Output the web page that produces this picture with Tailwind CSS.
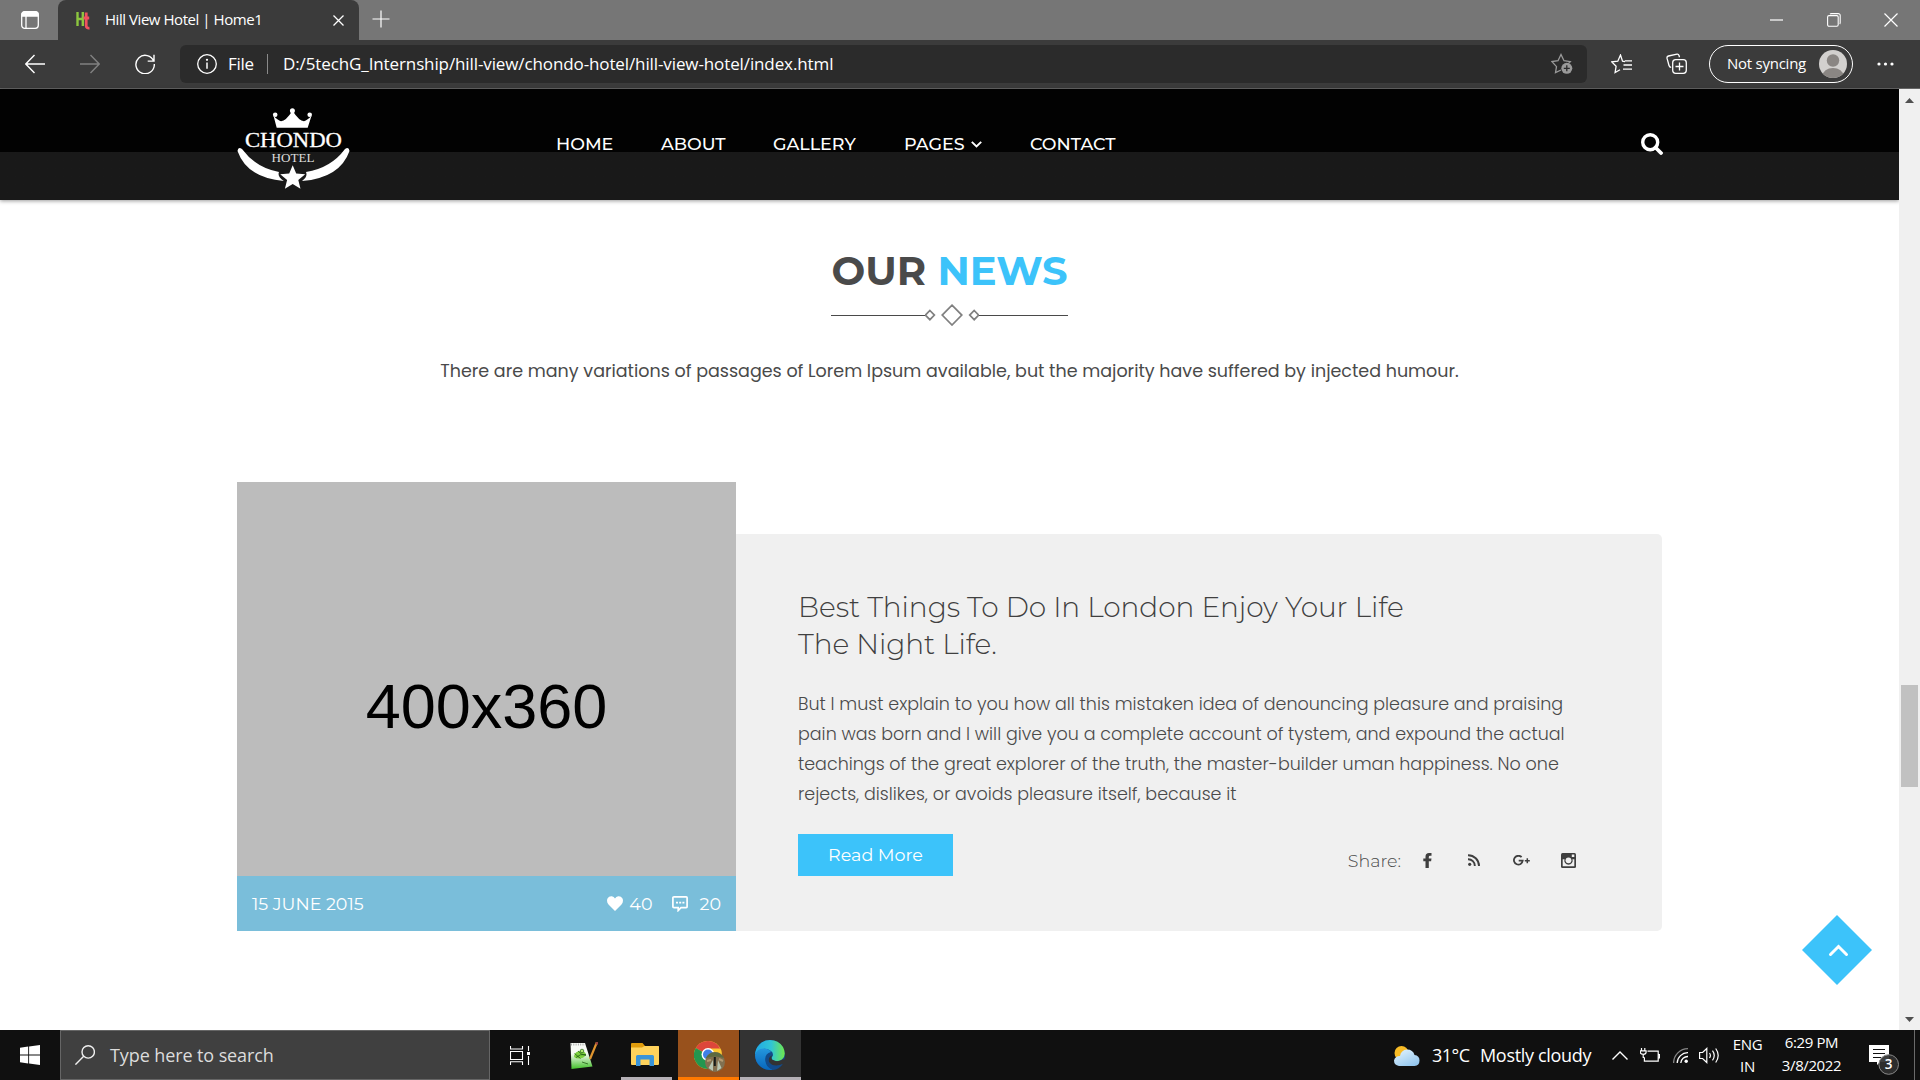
<!DOCTYPE html>
<html lang="en">
<head>
<meta charset="utf-8">
<title>Hill View Hotel | Home1</title>
<script src="https://cdn.jsdelivr.net/npm/@tailwindcss/browser@4"></script>
</head>
<body class="flex h-[1080px] w-[1920px] flex-col overflow-hidden bg-white font-['Open_Sans','Noto_Sans',sans-serif]">

<!-- Tab strip -->
<div class="flex h-10 shrink-0 items-end bg-[#767676] text-white">
  <div class="flex h-10 w-[58px] items-center justify-center rounded-br-lg pl-0.5">
    <svg class="size-[18px]" viewBox="0 0 18 18" fill="none" stroke="#fff" stroke-width="1.3"><rect x=".7" y=".7" width="16.6" height="16.6" rx="3"/><path d="M1 3.5a2.5 2.5 0 0 1 2.5-2.5h11A2.5 2.5 0 0 1 17 3.5V5H1z" fill="#fff"/><path d="M5 5v12"/></svg>
  </div>
  <div class="flex h-10 w-[301px] items-center rounded-t-lg bg-[#3b3b3b] pl-[18px] pr-3.5">
    <svg class="h-[19px] w-[14px] shrink-0" viewBox="0 0 14 19" fill="none" stroke-width="2.400"><path d="M1.500 1v14M2 8h5.500M6.800 1v14" stroke="#8cc63f"/><path d="M10.200 1.500v13.200q0 2.800 3.300 2.400M7.500 7h5.700" stroke="#f0525f" stroke-width="2.800"/></svg>
    <span class="mb-px ml-[15px] grow whitespace-nowrap text-[15px] leading-[39px] tracking-[-0.45px]">Hill View Hotel | Home1</span>
    <svg class="mr-px size-[11px] shrink-0" viewBox="0 0 11 11" stroke="#fff" stroke-width="1.3"><path d="M.5.5l10 10M10.500.5l-10 10"/></svg>
  </div>
  <svg class="mb-3 ml-[13px] size-[18px]" viewBox="0 0 18 18" stroke="#fff" stroke-width="1.2"><path d="M9 .5v17M.5 9h17"/></svg>
  <div class="ml-auto flex h-10 items-center gap-[43px] pr-[22px]">
    <svg class="-mr-px mr-px h-3.5 w-[13px]" viewBox="0 0 13 14" stroke="#fff" stroke-width="1.2"><path d="M0 7h13"/></svg>
    <svg class="size-3.5" viewBox="0 0 14 14" fill="none" stroke="#fff" stroke-width="1.1"><rect x=".6" y="2.6" width="10.6" height="10.6" rx="1.4"/><path d="M3 1Q3.400.6 4.500.6h6.700a2 2 0 0 1 2 2v6.900q0 1-.5 1.500"/></svg>
    <svg class="size-3.5" viewBox="0 0 14 14" stroke="#fff" stroke-width="1.2"><path d="M.5.5l13 13M13.500.5l-13 13"/></svg>
  </div>
</div>

<!-- Toolbar -->
<div class="flex h-[49px] shrink-0 items-center border-b border-[#666] bg-[#3b3b3b] pb-px text-white">
  <svg class="ml-[25px] h-5 w-5" viewBox="0 0 20 20" fill="none" stroke="#fff" stroke-width="1.4"><path d="M20 10H1M9.5 1L.8 10l8.7 9"/></svg>
  <svg class="ml-[35px] h-5 w-5" viewBox="0 0 20 20" fill="none" stroke="#818181" stroke-width="1.4"><path d="M0 10h19M10.500 1l8.700 9-8.700 9"/></svg>
  <svg class="ml-[35px] h-5 w-5" viewBox="0 0 20 20" fill="none" stroke="#fff" stroke-width="1.4"><path d="M18.800 7.500A9.200 9.200 0 1 0 19.300 10M19 .8v6.300h-6.300"/></svg>
  <div class="ml-[25px] flex h-[38px] w-[1407px] items-center rounded-md bg-[#2b2b2b] pl-[17px] pr-3.5">
    <svg class="size-5 shrink-0" viewBox="0 0 20 20" fill="none" stroke="#fff" stroke-width="1.3"><circle cx="10" cy="10" r="9.300"/><path d="M10 8.500v6.200" stroke-width="1.500"/><circle cx="10" cy="5.800" r=".5"/></svg>
    <span class="ml-[11px] w-[39px] whitespace-nowrap text-[17px] leading-9 tracking-[-0.3px]">File</span>
    <span class="h-5 w-px bg-[#8a8a8a]"></span>
    <span class="ml-[15px] grow whitespace-nowrap text-[17px] leading-9 tracking-[-0.11px]">D:/5techG_Internship/hill-view/chondo-hotel/hill-view-hotel/index.html</span>
    <svg class="h-[21px] w-[22px]" viewBox="0 0 22 21" fill="none" stroke="#9a9a9a" stroke-width="1.300"><path d="M10 17l-5.500 2.600 1-6L1 8.600l6-.9L10 1.500l3 6.200 6.300.9-2 2"/><circle cx="15.800" cy="15.300" r="5.500" fill="#9a9a9a" stroke="none"/><path d="M15.800 12.300v6M12.800 15.300h6" stroke="#2b2b2b"/></svg>
  </div>
  <svg class="ml-[24px] h-5 w-[22px]" viewBox="0 0 22 20" fill="none" stroke="#fff" stroke-width="1.300"><path d="M14 7.500l-2.500-.3L9.500 1 6.800 7.200l-6 .7 4.300 4.400-1 6.300L9 15.800M14 6.800h7M12.500 11h8.500M12 15.200h9"/></svg>
  <svg class="ml-[33px] h-[21px] w-[21px]" viewBox="0 0 21 21" fill="none" stroke="#fff" stroke-width="1.300"><rect x="6.700" y="6.700" width="13.600" height="13.600" rx="3"/><path d="M13.500 9.500v8M9.500 13.500h8M13.500 4.200l-.5-1.700Q12.500.9 11 1.200L2.500 3Q.7 3.500 1 5.200l2 7.300q.5 1.700 2.200 1.800"/></svg>
  <div class="ml-[22px] flex h-[38px] w-[144px] items-center rounded-full border-[1.5px] border-white pl-[17px] pr-[5px]">
    <span class="mb-0.5 grow whitespace-nowrap text-[15px] leading-8 tracking-[-0.25px]">Not syncing</span>
    <svg class="size-7 shrink-0" viewBox="0 0 28 28"><clipPath id="av"><circle cx="14" cy="14" r="14"/></clipPath><g clip-path="url(#av)"><rect width="28" height="28" fill="#d2d0ce"/><circle cx="14" cy="10.500" r="6.200" fill="#8a8683"/><ellipse cx="14" cy="26" rx="10.500" ry="8" fill="#8a8683"/></g></svg>
  </div>
  <svg class="ml-6 h-1 w-[17px]" viewBox="0 0 17 4" fill="#fff"><circle cx="2" cy="2" r="1.600"/><circle cx="8.500" cy="2" r="1.600"/><circle cx="15" cy="2" r="1.600"/></svg>
</div>

<!-- Page viewport -->
<div class="flex h-[941px] shrink-0">
  <main class="w-[1899px] font-['Montserrat','Inter',sans-serif] text-[#4a4a4a]">
    <header class="flex h-[111px] bg-linear-to-b from-[#020202] from-[63px] to-[#191919] to-[63px] pl-[237px] pr-[236px] text-white shadow-[0_1px_4px_rgba(0,0,0,0.4)]">
      <svg class="mt-[18px] h-[82px] w-[113px] shrink-0" viewBox="0 0 113 82" fill="#fff">
        <g transform="translate(.7 .8)">
        <path d="M39 20L35.800 8q4 4.500 7.500 5.400Q48 13.500 54.800 3q6.800 10.500 11.500 10.400 3.500-.9 7.500-5.400L70 20z"/>
        <circle cx="37.500" cy="7" r="2.300"/><circle cx="54.700" cy="3" r="2.500"/><circle cx="72" cy="7" r="2.300"/>
        </g>
        <text x="8" y="39.800" font-family="Liberation Serif, serif" font-size="21.500" textLength="97" lengthAdjust="spacingAndGlyphs" stroke="#fff" stroke-width=".3">CHONDO</text>
        <text x="34.500" y="55" font-family="Liberation Serif, serif" font-size="13.500" textLength="43" lengthAdjust="spacingAndGlyphs" fill="#ddd">HOTEL</text>
        <path d="M.5 44Q1 39.500 5 42q14 19 37 23-2 4.500 4.800 9Q10 71 .5 44zM112.500 44q-.5-4.500-4.500-2-14 19-39 23 2 4.500-4 9 38-3 47.500-30z"/>
        <path d="M55.700 58.300l3.500 8.300 9 .7-6.900 5.800 2.200 8.600-7.800-4.700-7.800 4.700 2.200-8.600-6.900-5.800 9-.7z"/>
      </svg>
      <nav class="ml-[206px] flex h-[109px] items-center text-[17.5px] font-medium leading-6">
        <a class="w-[105px]">HOME</a>
        <a class="w-[112px]">ABOUT</a>
        <a class="w-[131px]">GALLERY</a>
        <a class="flex w-[126px] items-center">PAGES
          <svg class="ml-1.5 mt-0.5 h-[7px] w-[11px]" viewBox="0 0 11 7" fill="none" stroke="#fff" stroke-width="1.900"><path d="M.8.8l4.700 4.700L10.200.8"/></svg></a>
        <a>CONTACT</a>
      </nav>
      <svg class="ml-auto mt-11 size-[22px]" viewBox="0 0 22 22" fill="none" stroke="#fff"><circle cx="9.200" cy="9.200" r="7.500" stroke-width="3.400"/><path d="M14.500 14.500l5.500 5.500" stroke-width="3.800" stroke-linecap="round"/></svg>
    </header>

    <section class="flex flex-col items-center pt-[47px]">
      <h2 class="text-[40px] font-bold leading-[48px]">OUR <span class="text-[#3cc3fa]">NEWS</span></h2>
      <div class="mt-[9px] flex h-[22px] w-[237px] items-center">
        <span class="h-px w-[94px] bg-[#4a4a4a]"></span>
        <svg class="h-[22px] w-[54px]" viewBox="0 0 54 22" fill="none" stroke="#808080" stroke-width="1.700"><path d="M4.900 6.500l4.500 4.600-4.500 4.600L.4 11.100zM27 1.200l9.800 9.900L27 21l-9.800-9.900zM49.200 6.500l4.500 4.600-4.500 4.600-4.500-4.600z"/></svg>
        <span class="h-px grow bg-[#4a4a4a]"></span>
      </div>
      <p class="mt-[30px] font-['Poppins','Inter',sans-serif] text-[17.5px] leading-[30px]">There are many variations of passages of Lorem Ipsum available, but the majority have suffered by injected humour.</p>
    </section>

    <article class="ml-[237px] mt-[96px] flex h-[449px] w-[1425px] items-end">
      <figure class="flex h-[449px] w-[499px] shrink-0 flex-col bg-[#bcbcbc]">
        <div class="flex h-[394px] justify-center pt-[189px] font-['Liberation_Sans',Arial,sans-serif] text-[63px] leading-[70px] text-black"><span>400x360</span></div>
        <figcaption class="flex h-[55px] items-center bg-[#7abeda] px-[15px] text-[17.5px] leading-6 text-white">
          <span class="grow">15 JUNE 2015</span>
          <svg class="h-[15px] w-4" viewBox="0 0 16 15" fill="#fff"><path d="M8 15L1.500 8.500Q-.8 5.500.5 2.500 2 0 4.800.3 7 .5 8 2.500 9 .5 11.200.3q2.800-.3 4.300 2.200 1.300 3-1 6z"/></svg>
          <span class="ml-1.5">40</span>
          <svg class="ml-[19px] h-4 w-4" viewBox="0 0 16 16" fill="none" stroke="#fff" stroke-width="1.700"><path d="M2 .9h12.200q.9 0 .9.900v8.900q0 .9-.9.900H9L6.200 14.500v-2.900H2q-1.100 0-1.100-.9V1.800Q.9.900 2 .9z"/><path d="M4 6.600h8.500" stroke-dasharray="2 1.200"/></svg>
          <span class="ml-[12px]">20</span>
        </figcaption>
      </figure>
      <div class="flex h-[397px] grow flex-col rounded-r-[5px] bg-[#f0f0f0] pl-[62px] pr-[86px] pt-[55px]">
        <h3 class="h-[74px] whitespace-nowrap text-[28px] font-light leading-[37px] tracking-[-0.07px] text-[#404040]">Best Things To Do In London Enjoy Your Life<br>The Night Life.</h3>
        <p class="mt-[26px] whitespace-nowrap font-['Poppins','Inter',sans-serif] text-[17.5px] font-light leading-[30px]">But I must explain to you how all this mistaken idea of denouncing pleasure and praising<br>pain was born and I will give you a complete account of tystem, and expound the actual<br>teachings of the great explorer of the truth, the master-builder uman happiness. No one<br>rejects, dislikes, or avoids pleasure itself, because it</p>
        <div class="mt-[25px] flex items-start">
          <a class="flex h-[42px] w-[155px] items-center justify-center bg-[#3cc3fa] text-[17.5px] leading-6 text-white">Read More</a>
          <div class="ml-auto mt-[15px] flex h-6 items-center text-[17.5px] font-light leading-6">
            <span>Share:</span>
            <svg class="mb-0.5 ml-[22px] h-[15px] w-[9px]" viewBox="0 0 9 15" fill="#3f3f3f"><path d="M2.500 15V8.300H.3V5.500h2.200V3.700Q2.500 0 6 0h2.500v2.700H7q-1.200 0-1.200 1.200v1.600h2.700L8.100 8.300H5.800V15z"/></svg>
            <svg class="mb-0.5 ml-[36px] h-3 w-3" viewBox="0 0 12 12" fill="none" stroke="#3f3f3f" stroke-width="1.900"><circle cx="1.700" cy="10.300" r="1.600" fill="#3f3f3f" stroke="none"/><path d="M0 5.200A6.600 6.600 0 0 1 6.800 12M0 1.200A10.800 10.800 0 0 1 11 12"/></svg>
            <svg class="mb-0.5 ml-[33px] h-[11px] w-[17px]" viewBox="0 0 17 11" fill="none" stroke="#3f3f3f"><path d="M8.600 2.200A4.400 4.400 0 1 0 9.700 5.700H5.700" stroke-width="1.800"/><path d="M14.300 3.200v5M11.800 5.700h5" stroke-width="1.500"/></svg>
            <svg class="mb-0.5 ml-[31px] size-[15px]" viewBox="0 0 15 15"><rect width="15" height="15" rx="1.500" fill="#3f3f3f"/><path d="M1.700 6.200h1.800a4.200 4.200 0 1 0 8 0h1.800v7.100H1.700zM10.800 1.500h2.500v2.500h-2.500z" fill="#f0f0f0"/><circle cx="7.500" cy="7.300" r="2.900" fill="#f0f0f0"/></svg>
          </div>
        </div>
      </div>
    </article>
    <a class="absolute left-[1802px] top-[915px]"><svg class="size-[70px]" viewBox="0 0 70 70"><path d="M35 0l35 35-35 35L0 35z" fill="#3cc3fa"/><path d="M28.500 39.500l8-8 8 8" fill="none" stroke="#fff" stroke-width="3" stroke-linecap="round"/></svg></a>
  </main>
  <!-- Scrollbar -->
  <div class="flex w-[21px] flex-col items-center bg-[#f0f0f0] pt-[9px] pb-2">
    <svg class="h-[5px] w-[9px]" viewBox="0 0 9 5" fill="#505050"><path d="M0 5l4.500-5L9 5z"/></svg>
    <span class="mt-[582px] h-[102px] w-[17px] bg-[#c1c1c1]"></span>
    <svg class="mt-auto h-[5px] w-[9px]" viewBox="0 0 9 5" fill="#505050"><path d="M0 0h9L4.500 5z"/></svg>
  </div>
</div>

<!-- Taskbar -->
<div class="flex h-[50px] shrink-0 items-center bg-[#101010] text-white">
  <svg class="ml-5 size-5" viewBox="0 0 20 20" fill="#fff"><path d="M0 2.800l8.200-1.200v7.900H0zM9.100 1.500L20 0v9.500H9.100zM0 10.400h8.200v8L0 17.200zM9.100 10.400H20V20L9.100 18.500z"/></svg>
  <div class="ml-5 flex h-[50px] w-[430px] items-center border border-[#666] bg-[#404040] pl-3.5">
    <svg class="size-5" viewBox="0 0 20 20" fill="none" stroke="#f0f0f0" stroke-width="1.400"><circle cx="13.200" cy="6.900" r="6.200"/><path d="M8.700 11.300L.4 19.600"/></svg>
    <span class="ml-[15px] text-[18px] leading-8 tracking-[-0.1px] text-[#dcdcdc]">Type here to search</span>
  </div>
  <svg class="ml-5 h-[19px] w-5" viewBox="0 0 20 19" fill="none" stroke="#fff" stroke-width="1.100"><path d="M.5 0v3h12V0M.5 19v-3.200h12V19M.5 5.500h12v8H.5zM18.500 0v5M18.500 10v9"/><path d="M17 6h3v3h-3z" fill="#fff" stroke="none"/></svg>
  <svg class="ml-10 h-[27px] w-7" viewBox="0 0 28 27"><defs><linearGradient id="np" x2="0" y2="1"><stop offset=".4" stop-color="#f7faf5"/><stop offset="1" stop-color="#43c02a"/></linearGradient></defs><path d="M.5 1h14.500l7.500 23.500L1.500 27z" fill="url(#np)"/><path d="M1 2.500h14" stroke="#aaa" stroke-width="2" stroke-dasharray="1 1.300"/><path d="M4 14q1-5 7-5 5 .5 5 4-3 4-8 3.500-4-.5-4-2.500z" fill="#7ed13f"/><path d="M4.500 11.500l6 5M8 9q3 4 8 4.500M6 15.500q4-4 10-3M12 20l6 2" stroke="#235e17" stroke-width=".8" fill="none"/><circle cx="12" cy="9" r="1.800" fill="#b4ec72" stroke="#235e17" stroke-width=".7"/><path d="M27 0l-7 17" stroke="#e0952f" stroke-width="2.200"/><path d="M27.500 0l-1.200 2.600" stroke="#9b4242" stroke-width="2.400"/></svg>
  <div class="ml-[23px] flex h-[50px] w-[51px] flex-col items-center">
    <svg class="mr-[3px] mt-[13px] h-[24px] w-7" viewBox="0 0 28 24"><path d="M0 1q0-1 1-1h10.500L14 3h13q1 0 1 1v17H0z" fill="#e09c0c"/><path d="M0 4.500h11L13.500 3H27q1 0 1 1v17q0 1-1 1H1q-1 0-1-1z" fill="#ffd35c"/><path d="M5 13.500q0-1.500 1.500-1.500h15q1.500 0 1.500 1.500V23h-4.500v-6.500h-9V23H5z" fill="#3a94d8"/></svg>
    <span class="mt-auto h-[3px] w-[51px] bg-[#b5b0b6]"></span>
  </div>
  <div class="ml-1.5 flex h-[50px] w-[61px] flex-col items-center bg-[#98511c]">
    <svg class="ml-px mt-[11px] h-[31px] w-[31px]" viewBox="0 0 31 31"><circle cx="14" cy="14" r="14" fill="#fbc934"/><path d="M14 14L1.800 7A14 14 0 0 1 26.200 7.500H14z" fill="#dd463b"/><path d="M14 14L1.800 7A14 14 0 0 0 14 28l5-10z" fill="#23964f"/><circle cx="14" cy="13.500" r="6.500" fill="#fff"/><circle cx="14" cy="13.500" r="5" fill="#407fe6"/><circle cx="21" cy="21" r="10" fill="#817050"/><path d="M12 17a10 10 0 0 1 18 0q-9-3-18 0z" fill="#5c6a40"/><path d="M14.500 27l4.500-8v11zM27.500 27l-3.500-8-1 11z" fill="#b8c6b2"/><path d="M20.800 16v9" stroke="#151b18" stroke-width="2"/><path d="M13 20l4-1M25 18l4 2" stroke="#b39a71" stroke-width="2"/></svg>
    <span class="mt-auto h-[3px] w-[61px] bg-[#ff7900]"></span>
  </div>
  <div class="ml-px flex h-[50px] w-[61px] flex-col items-center bg-[#333]">
    <svg class="mr-0.5 mt-2.5 size-[30px]" viewBox="0 0 30 30"><defs><linearGradient id="e1" x2="1"><stop stop-color="#20a9e5"/><stop offset=".55" stop-color="#31c5d4"/><stop offset="1" stop-color="#70e94b"/></linearGradient><linearGradient id="e2" x2="0" y2="1"><stop stop-color="#2497de"/><stop offset="1" stop-color="#0766bc"/></linearGradient></defs><circle cx="15" cy="15" r="15" fill="#124b8b"/><path d="M0 15A15 15 0 0 1 15 0q8.500 0 13 7 4 8-1 12.500-5 3-9.500.5-2-1.500.2-4 1-3-1.700-5Q7 5 0 15z" fill="url(#e1)"/><path d="M0 15Q2 8 9 8.500q5 .3 7 3.500-7 2-5.500 9Q13 28.500 18 29.700A15 15 0 0 1 0 15z" fill="url(#e2)"/><path d="M17.700 15q-2.500 2-.3 4.800 5 3.200 10.700-.6l2 .8v10h-6l4-6q-10 3.800-14-2-1.500-5 3.600-7z" fill="#333"/><path d="M15 16q-4 2-1.500 7 5 6 14.500.8-4 6-10 6.100-8-3-7.500-9.900Q11 16 15 16z" fill="#124b8b"/></svg>
    <span class="mt-auto h-[3px] w-[61px] bg-[#b5b0b6]"></span>
  </div>
  <div class="ml-auto flex h-[50px] items-center">
    <svg class="mt-px h-[20px] w-[26px]" viewBox="0 0 26 20"><defs><linearGradient id="cl" x2=".7" y2="1"><stop stop-color="#e8f6ff"/><stop offset="1" stop-color="#94c7ee"/></linearGradient></defs><circle cx="7.500" cy="7" r="7" fill="#f8bb25"/><path d="M5 20q-5-1-5-5.500Q1 10 6 10q1-6 7-6.500 6 0 7.500 5.500 5 .5 5 5.500t-5 5.500z" fill="url(#cl)"/></svg>
    <span class="ml-3 w-[48px] whitespace-nowrap text-[18px] leading-8 tracking-[-0.5px]">31°C</span>
    <span class="w-[132px] whitespace-nowrap text-[18px] leading-8 tracking-[-0.32px]">Mostly cloudy</span>
    <svg class="h-[9px] w-4" viewBox="0 0 16 9" fill="none" stroke="#fff" stroke-width="1.400"><path d="M.5 8.500L8 1l7.500 7.500"/></svg>
    <svg class="ml-3 h-[15px] w-5" viewBox="0 0 20 15" fill="none" stroke="#fff" stroke-width="1.200"><path d="M7.500 3.100h10.700v10H4.400V9.500M18.500 6.500h1v3.500h-1M1.500 0v2.500M4.800 0v2.500M.3 2.800h5.800v1.500q0 1.900-2.900 2Q.3 6.200.3 4.300zM3.200 6.500v3h1.200"/></svg>
    <svg class="ml-[13px] h-[15px] w-[15px]" viewBox="0 0 15 15" fill="none" stroke-width="1.300"><path d="M.6 15A14.400 14.400 0 0 1 15 .7" stroke="#858585"/><path d="M4.200 15A10.500 10.500 0 0 1 15 4.700M7.800 15A7 7 0 0 1 15 8.500" stroke="#fff"/><circle cx="13.200" cy="13.200" r="1.700" fill="#fff"/></svg>
    <svg class="ml-[11px] h-[17px] w-[21px]" viewBox="0 0 21 17" fill="none" stroke="#fff" stroke-width="1.200"><path d="M.6 5.500h3L7.800 1.500v14L3.600 11.500h-3zM10.500 6q1.800 2.500 0 5M13.500 3.700q3.500 4.800 0 9.600M16.700 1.500q5 7 0 14"/></svg>
    <div class="ml-3 flex h-[50px] w-[31px] flex-col items-center pt-[3px] text-[15px] leading-[22px] tracking-[-0.3px]"><span>ENG</span><span>IN</span></div>
    <div class="ml-[17px] flex h-[50px] w-[63px] flex-col items-center pt-px text-[15px] leading-[23px] tracking-[-0.4px]"><span>6:29 PM</span><span>3/8/2022</span></div>
    <svg class="ml-[26px] mt-2 h-8 w-[31px]" viewBox="0 0 31 32"><path d="M0 2h20v17h-9l-3 3v-3H0z" fill="#fff"/><path d="M4 6.500h12M4 10.500h12M4 14.500h8" stroke="#101010" stroke-width="1.200"/><circle cx="19.700" cy="21.500" r="9.800" fill="#303030" fill-opacity=".92" stroke="#888"/><text x="19.700" y="26.300" text-anchor="middle" font-size="13.500" font-weight="600" fill="#fff">3</text></svg>
    <span class="ml-[14px] h-[50px] w-px bg-[#6a6a6a]"></span>
    <span class="w-[5px]"></span>
  </div>
</div>
</body>
</html>
